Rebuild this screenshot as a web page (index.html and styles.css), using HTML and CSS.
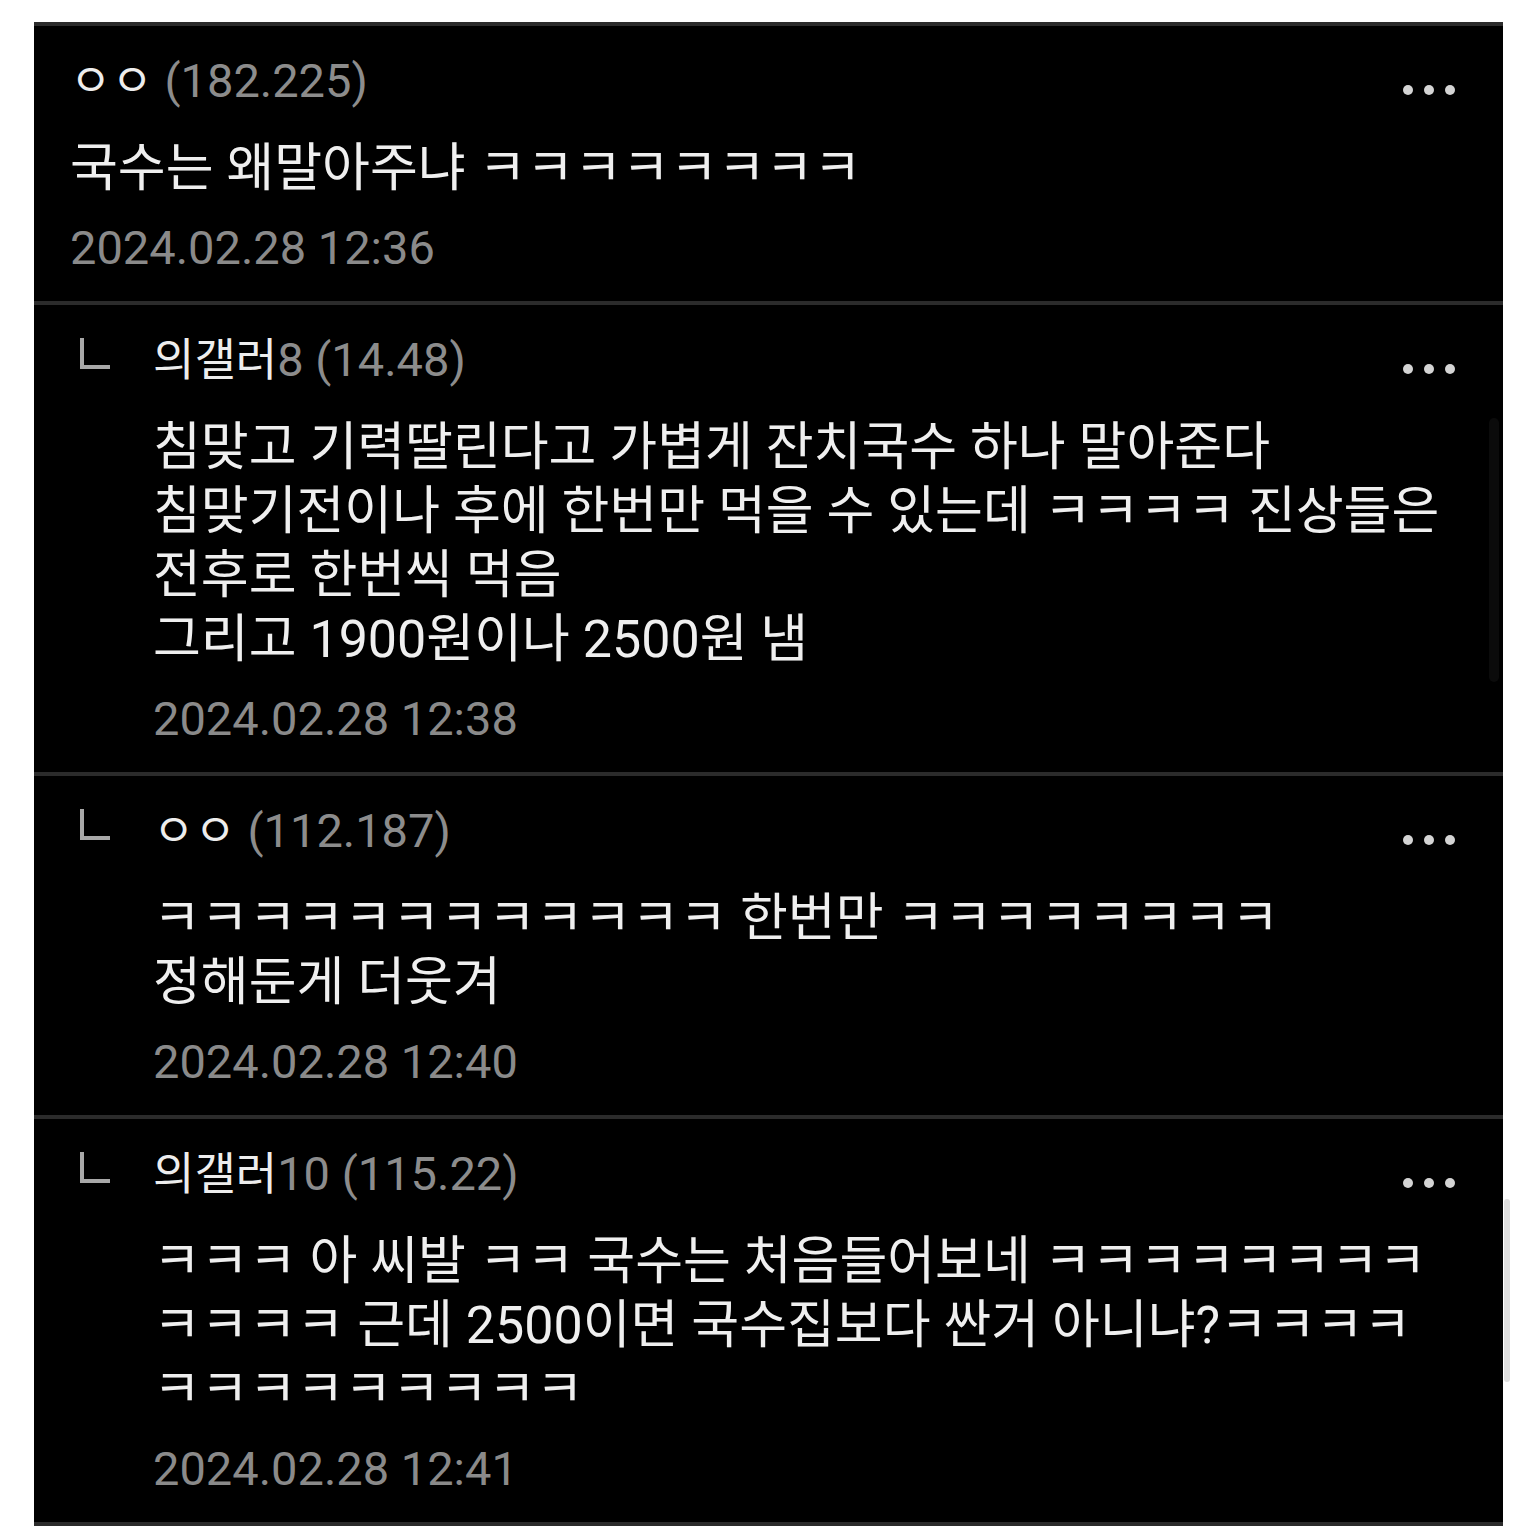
FILE: index.html
```html
<!DOCTYPE html>
<html lang="ko">
<head>
<meta charset="utf-8">
<link rel="stylesheet" href="styles.css">
</head>
<body>
<div class="panel">
  <div class="comment">
    <div class="body">
      <div class="head"><span class="nick">ㅇㅇ</span> <span class="ip">(182.225)</span></div>
      <div class="text">
        <div class="line">국수는 왜말아주냐 ㅋㅋㅋㅋㅋㅋㅋㅋ</div>
      </div>
      <div class="date">2024.02.28 12:36</div>
    </div>
    <div class="more"><i></i><i></i><i></i></div>
  </div>
  <div class="comment reply">
    <div class="mark"></div>
    <div class="body">
      <div class="head"><span class="nick">의갤러</span><span class="ip">8 (14.48)</span></div>
      <div class="text">
        <div class="line">침맞고 기력딸린다고 가볍게 잔치국수 하나 말아준다</div>
        <div class="line">침맞기전이나 후에 한번만 먹을 수 있는데 ㅋㅋㅋㅋ 진상들은</div>
        <div class="line">전후로 한번씩 먹음</div>
        <div class="line">그리고 1900원이나 2500원 냄</div>
      </div>
      <div class="date">2024.02.28 12:38</div>
    </div>
    <div class="more"><i></i><i></i><i></i></div>
  </div>
  <div class="comment reply">
    <div class="mark"></div>
    <div class="body">
      <div class="head"><span class="nick">ㅇㅇ</span> <span class="ip">(112.187)</span></div>
      <div class="text">
        <div class="line">ㅋㅋㅋㅋㅋㅋㅋㅋㅋㅋㅋㅋ 한번만 ㅋㅋㅋㅋㅋㅋㅋㅋ</div>
        <div class="line">정해둔게 더웃겨</div>
      </div>
      <div class="date">2024.02.28 12:40</div>
    </div>
    <div class="more"><i></i><i></i><i></i></div>
  </div>
  <div class="comment reply">
    <div class="mark"></div>
    <div class="body">
      <div class="head"><span class="nick">의갤러</span><span class="ip">10 (115.22)</span></div>
      <div class="text">
        <div class="line">ㅋㅋㅋ 아 씨발 ㅋㅋ 국수는 처음들어보네 ㅋㅋㅋㅋㅋㅋㅋㅋ</div>
        <div class="line">ㅋㅋㅋㅋ 근데 2500이면 국수집보다 싼거 아니냐?ㅋㅋㅋㅋ</div>
        <div class="line">ㅋㅋㅋㅋㅋㅋㅋㅋㅋ</div>
      </div>
      <div class="date">2024.02.28 12:41</div>
    </div>
    <div class="more"><i></i><i></i><i></i></div>
  </div>
  <div class="track"></div>
  <div class="scrollbar"></div>
</div>
</body>
</html>
```

FILE: styles.css
```css
html, body {
  margin: 0;
  padding: 0;
  background: #ffffff;
}
body {
  font-family: Roboto, "Noto Sans CJK KR", sans-serif;
  padding-top: 22px;
}
.panel {
  position: relative;
  margin-left: 34px;
  width: 1469px;
  background: #000;
  border-top: 4px solid #2b2b2b;
}
.comment {
  display: flex;
  align-items: flex-start;
  padding: 26px 0 27px 36px;
  border-bottom: 4px solid #2b2b2b;
}
.reply {
  padding-left: 46px;
}
.mark {
  width: 26px;
  height: 27px;
  margin-top: 7px;
  margin-right: 43px;
  border-left: 4px solid #a8a8a8;
  border-bottom: 4px solid #a8a8a8;
  flex: none;
}
.body {
  flex: 1 1 0;
  min-width: 0;
  white-space: nowrap;
}
.head {
  height: 52px;
  font-size: 47px;
  line-height: 52px;
  color: #8c8c8c;
}
.nick {
  color: #ededed;
  font-size: 45px;
  font-family: "Noto Sans CJK KR", sans-serif;
}
.ip {
  color: #8c8c8c;
}
.text {
  margin-top: 33px;
  font-size: 52px;
  color: #efefef;
}
.line {
  height: 64px;
  line-height: 64px;
}
.date {
  height: 52px;
  margin-top: 21px;
  font-size: 47px;
  line-height: 52px;
  color: #8a8a8a;
}
.more {
  display: flex;
  gap: 11px;
  margin-top: 33px;
  margin-right: 48px;
  flex: none;
}
.more i {
  display: block;
  width: 10px;
  height: 10px;
  border-radius: 50%;
  background: #d4d4d4;
}
.track {
  position: absolute;
  right: 4px;
  top: 392px;
  width: 10px;
  height: 264px;
  border-radius: 5px;
  background: #0b0b0b;
}
.scrollbar {
  position: absolute;
  right: -7px;
  top: 1173px;
  width: 6px;
  height: 183px;
  border-radius: 3px;
  background: #dedede;
}
```
